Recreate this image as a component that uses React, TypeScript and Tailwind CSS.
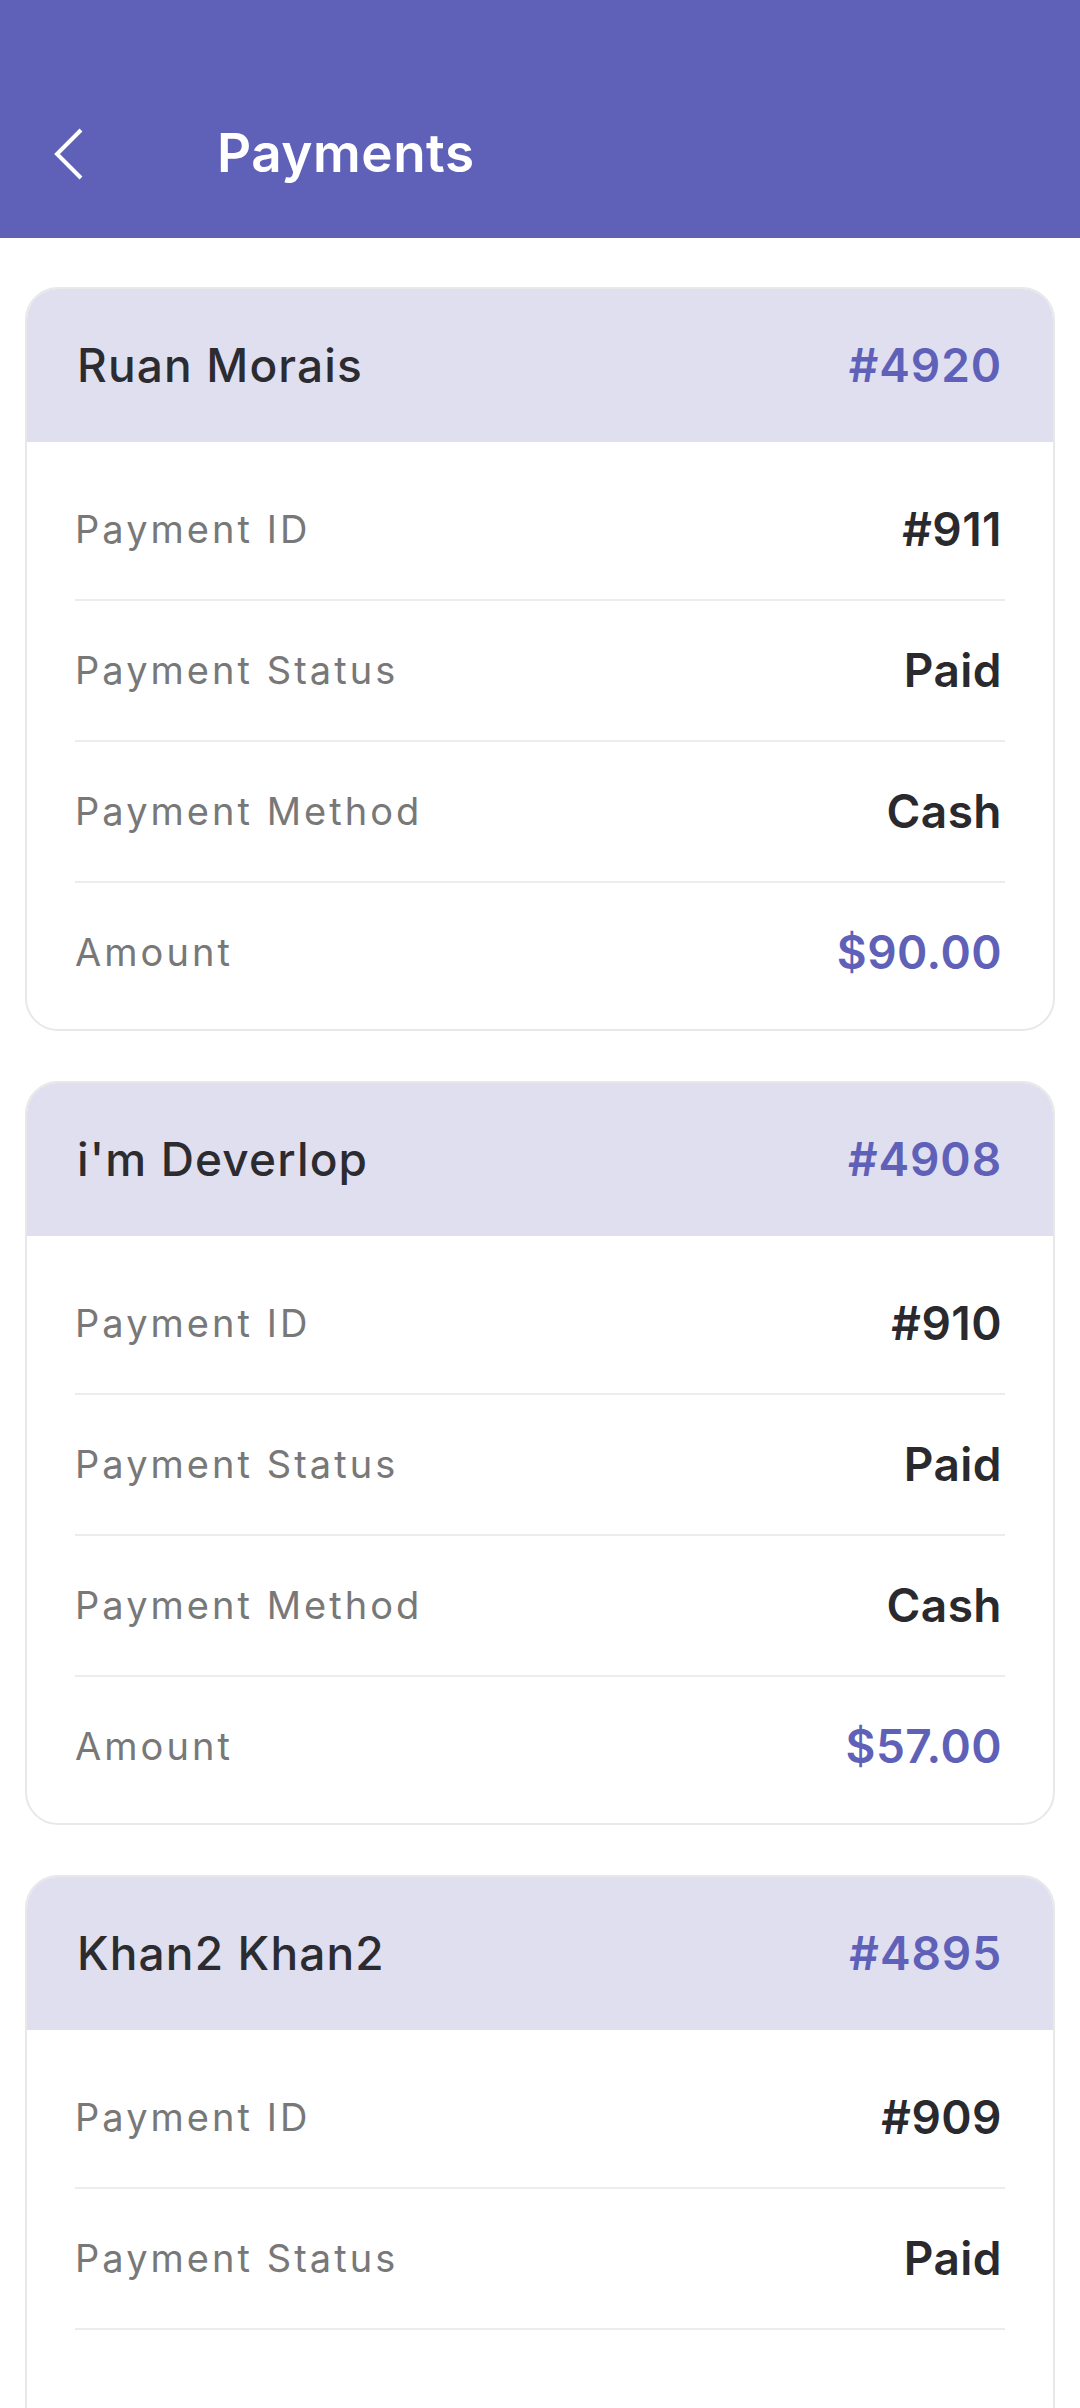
import React from "react";

type Payment = {
    name: string;
    order: string;
    paymentId: string;
    status: string;
    method?: string;
    amount?: string;
};

const payments: Payment[] = [
    { name: "Ruan Morais", order: "#4920", paymentId: "#911", status: "Paid", method: "Cash", amount: "$90.00" },
    { name: "i'm Deverlop", order: "#4908", paymentId: "#910", status: "Paid", method: "Cash", amount: "$57.00" },
    { name: "Khan2 Khan2", order: "#4895", paymentId: "#909", status: "Paid" },
];

function Row({ label, value, accent, last }: { label: string; value: string; accent?: boolean; last?: boolean }) {
    return (
        <div className={`flex items-center justify-between pr-[3px] ${last ? "h-[139px]" : "h-[141px] border-b-2 border-[#ececec]"}`}>
            <span className="text-[38px] font-normal tracking-[0.08em] text-[#787878]">{label}</span>
            <span className={`text-[46px] font-semibold tracking-[0.01em] ${accent ? "text-[#5f61b9]" : "text-[#2a2a2e]"}`}>{value}</span>
        </div>
    );
}

function PaymentCard({ p }: { p: Payment }) {
    return (
        <div className="shrink-0 overflow-hidden rounded-[33px] border-2 border-[#e8e8e8] bg-white">
            <div className="flex h-[153px] items-center justify-between bg-[#e0dff0] pl-[50px] pr-[51px]">
                <span className="text-[46px] font-medium tracking-[0.025em] text-[#2c2c30]">{p.name}</span>
                <span className="text-[46px] font-semibold tracking-[0.02em] text-[#5f61b9]">{p.order}</span>
            </div>
            <div className="px-[48px] pt-[18px] pb-[7px]">
                <Row label="Payment ID" value={p.paymentId} />
                <Row label="Payment Status" value={p.status} />
                {p.method ? (
                    <>
                        <Row label="Payment Method" value={p.method} />
                        <Row label="Amount" value={p.amount ?? ""} accent last />
                    </>
                ) : (
                    <div className="h-[200px]" />
                )}
            </div>
        </div>
    );
}

export default function App() {
    return (
        <div className="h-[2408px] overflow-hidden bg-white" style={{ fontFamily: "Inter, 'Noto Sans', sans-serif" }}>
            <div className="flex h-[238px] items-center bg-[#5f61b9] pt-[70px]">
                <button className="ml-[50px] flex h-[60px] w-[36px] items-center justify-center">
                    <svg width="32" height="54" viewBox="0 0 32 54" fill="none">
                        <path d="M29 3 L5 27 L29 51" stroke="white" strokeWidth="4" />
                    </svg>
                </button>
                <h1 className="ml-[131px] text-[53px] font-semibold tracking-[0.01em] text-white">Payments</h1>
            </div>
            <div className="flex flex-col gap-[50px] px-[25px] pt-[49px]">
                {payments.map((p) => (
                    <PaymentCard key={p.order} p={p} />
                ))}
            </div>
        </div>
    );
}
